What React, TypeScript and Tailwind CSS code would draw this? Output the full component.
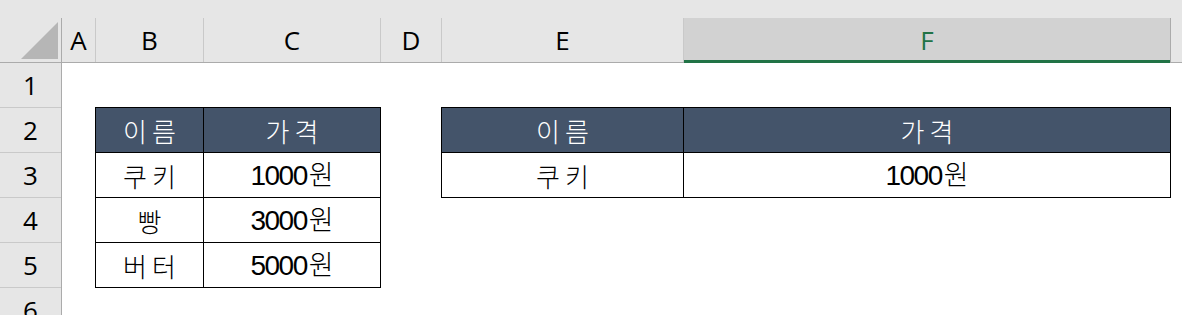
import React from 'react';

type Cell = { text: string; head?: boolean };

const columns = [
  { key: 'A', width: 'w-[34px]' },
  { key: 'B', width: 'w-[108px]' },
  { key: 'C', width: 'w-[177px]' },
  { key: 'D', width: 'w-[61px]' },
  { key: 'E', width: 'w-[242px]' },
  { key: 'F', width: 'w-[487px]' },
];

const leftTable: Cell[][] = [
  [{ text: '이름', head: true }, { text: '가격', head: true }],
  [{ text: '쿠키' }, { text: '1000원' }],
  [{ text: '빵' }, { text: '3000원' }],
  [{ text: '버터' }, { text: '5000원' }],
];

const rightTable: Cell[][] = [
  [{ text: '이름', head: true }, { text: '가격', head: true }],
  [{ text: '쿠키' }, { text: '1000원' }],
];

const uiFont = "font-['Open_Sans','Noto_Sans',sans-serif]";
const cellFont = "font-['Liberation_Sans','Noto_Sans_CJK_KR',sans-serif]";

// splits "1000원" so digits and hangul can be sized separately
const CellText: React.FC<{ text: string }> = ({ text }) => {
  const m = text.match(/^(\d+)(.*)$/);
  if (m) {
    return (
      <span className="flex items-baseline">
        <span className="text-[28px] tracking-[-1.5px]">{m[1]}</span>
        <span className="font-['Noto_Sans_CJK_KR',sans-serif] font-light text-[27px] ml-[2px]">{m[2]}</span>
      </span>
    );
  }
  return (
    <span className="font-['Noto_Sans_CJK_KR',sans-serif] font-light text-[26px] tracking-[0.2em] mr-[-0.2em]">
      {text}
    </span>
  );
};

const TableBlock: React.FC<{ rows: Cell[][]; widths: string[] }> = ({ rows, widths }) => (
  <div className="flex flex-col border-r border-b border-black">
    {rows.map((row, ri) => (
      <div key={ri} className="flex">
        {row.map((cell, ci) => (
          <div
            key={ci}
            className={`${widths[ci]} h-[45px] border-l border-t border-black flex items-center justify-center ${cellFont} ${
              cell.head ? 'bg-[#44546a] text-white' : 'bg-white text-black'
            }`}
          >
            <CellText text={cell.text} />
          </div>
        ))}
      </div>
    ))}
  </div>
);

const App: React.FC = () => {
  return (
    <div className="w-[1182px] h-[315px] overflow-hidden bg-[#e6e6e6] select-none">
      {/* strip above the column headers */}
      <div className="h-[18px]" />

      {/* column headers */}
      <div className="flex h-[45px] border-b border-[#ababab]">
        <div className="w-[62px] border-r border-[#ababab] relative">
          <svg className="absolute left-[21px] top-[4px]" width="37" height="37" viewBox="0 0 37 37">
            <polygon points="37,0 37,37 0,37" fill="#b6b6b6" />
          </svg>
        </div>
        {columns.map((col) =>
          col.key === 'F' ? (
            <div
              key={col.key}
              className={`${col.width} bg-[#d2d2d2] border-r border-[#ababab] flex items-center justify-center relative ${uiFont} text-[26px] text-[#217346]`}
            >
              {col.key}
              <div className="absolute left-0 right-0 bottom-[-1px] h-[3px] bg-[#217346]" />
            </div>
          ) : (
            <div
              key={col.key}
              className={`${col.width} border-r border-[#c9c9c9] flex items-center justify-center ${uiFont} text-[26px] text-black`}
            >
              {col.key}
            </div>
          )
        )}
      </div>

      {/* sheet body */}
      <div className="flex">
        <div className={`w-[62px] border-r border-[#ababab] flex flex-col ${uiFont} text-[26px] text-black`}>
          {[1, 2, 3, 4, 5, 6].map((n) => (
            <div key={n} className="h-[45px] border-b border-[#c9c9c9] flex items-center justify-center shrink-0">
              {n}
            </div>
          ))}
        </div>
        <div className="flex-1 bg-white h-[252px]">
          <div className="h-[44px]" />
          <div className="flex items-start">
            <div className="w-[33px]" />
            <TableBlock rows={leftTable} widths={['w-[108px]', 'w-[177px]']} />
            <div className="w-[60px]" />
            <TableBlock rows={rightTable} widths={['w-[242px]', 'w-[487px]']} />
          </div>
        </div>
      </div>
    </div>
  );
};

export default App;
